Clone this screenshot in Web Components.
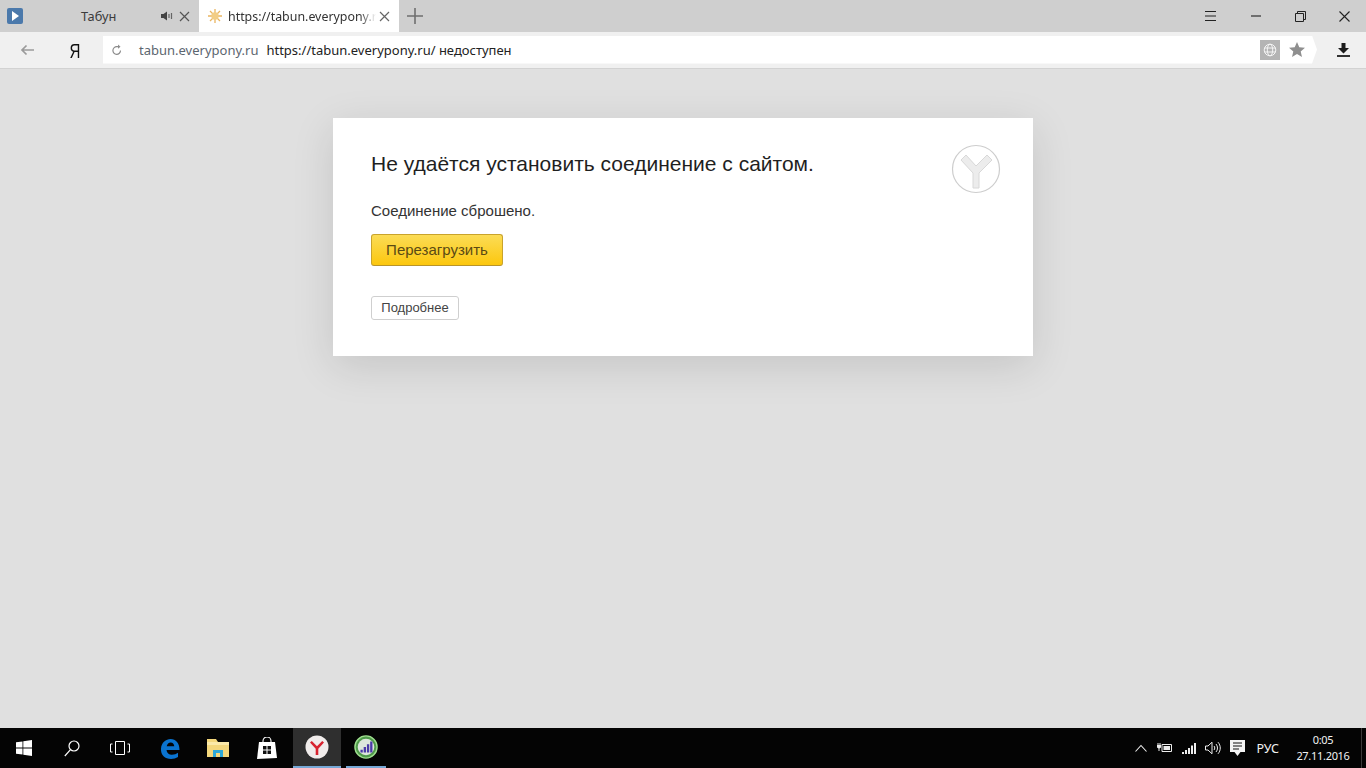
<!DOCTYPE html>
<html lang="ru">
<head>
<meta charset="utf-8">
<title>Табун</title>
<style>
    html, body { margin: 0; height: 100%; overflow: hidden; }
    body {
        display: flex;
        flex-direction: column;
        width: 1366px;
        height: 768px;
        background: #e0e0e0;
        font-family: "Noto Sans", "Liberation Sans", sans-serif;
    }
</style>
</head>
<body>
<tab-strip></tab-strip>
<nav-toolbar></nav-toolbar>
<error-page>
    <span slot="title">Не удаётся установить соединение с сайтом.</span>
    <span slot="reason">Соединение сброшено.</span>
</error-page>
<win-taskbar></win-taskbar>

<script>
class TabStrip extends HTMLElement {
    connectedCallback() {
        this.attachShadow({ mode: 'open' });
        this.shadowRoot.innerHTML = `
            <style>
                :host {
                    display: flex;
                    align-items: stretch;
                    height: 32px;
                    background: #cfcfcf;
                    color: #3c3c3c;
                    font-family: "Noto Sans", sans-serif;
                    font-size: 12.8px;
                    flex: none;
                }
                .pin { width: 7px; flex: none; }
                .fav { width: 16px; height: 16px; background: #4b79ab; border-radius: 2px; align-self: center; display: flex; align-items: center; justify-content: center; margin-top: -1px; flex: none; }
                .tab { display: flex; align-items: center; box-sizing: border-box; flex: none; }
                .first { width: 176px; }
                .first .name { width: 58px; margin-left: 58px; text-align: left; flex: none; }
                .snd { margin-left: 22px; flex: none; }
                .x { flex: none; display: block; }
                .first .x { margin-left: 6px; }
                .active { width: 200px; background: #fff; color: #333; font-size: 12.4px; }
                .sun { margin-left: 9px; flex: none; }
                .url { margin-left: 6px; width: 148px; overflow: hidden; white-space: nowrap; flex: none;
                    -webkit-mask-image: linear-gradient(90deg, #000 132px, transparent 148px);
                    mask-image: linear-gradient(90deg, #000 132px, transparent 148px); }
                .active .x { margin-left: 3px; }
                .plus { margin-left: 8px; align-self: center; display: block; }
                .spacer { flex: 1; }
                .win { width: 45px; display: flex; align-items: center; justify-content: center; flex: none; }
                .win.menu { width: 46px; }
                .win.close { width: 43px; }
                svg { display: block; }
            </style>
            <span class="pin"></span>
            <span class="fav"><svg width="8" height="10" viewBox="0 0 8 10"><path d="M1 0l7 5-7 5z" fill="#fff"/></svg></span>
            <div class="tab first">
                <span class="name">Табун</span>
                <svg class="snd" width="12" height="10" viewBox="0 0 12 10"><path d="M0 3h2.500L6 .5v9L2.500 7H0z" fill="#444"/><path d="M8 3v4M10.500 2v6" stroke="#666" stroke-width="1.200"/></svg>
                <svg class="x" width="11" height="11" viewBox="0 0 11 11"><path d="M1 1l9 9M10 1l-9 9" stroke="#555" stroke-width="1.200"/></svg>
            </div>
            <div class="tab active">
                <svg class="sun" width="14" height="14" viewBox="0 0 14 14"><g stroke="#eab560" stroke-width="1.300"><path d="M7 0v14M0 7h14M2 2l10 10M12 2L2 12"/></g><circle cx="7" cy="7" r="3.700" fill="#f2cd86"/></svg>
                <span class="url">https://tabun.everypony.ru/</span>
                <svg class="x" width="11" height="11" viewBox="0 0 11 11"><path d="M1 1l9 9M10 1l-9 9" stroke="#666" stroke-width="1.200"/></svg>
            </div>
            <svg class="plus" width="16" height="16" viewBox="0 0 16 16"><path d="M8 0v16M0 8h16" stroke="#6f6f6f" stroke-width="1.600"/></svg>
            <span class="spacer"></span>
            <div class="win menu"><svg width="11" height="10" viewBox="0 0 11 10"><path d="M0 .5h11M0 5h11M0 9.500h11" stroke="#222"/></svg></div>
            <div class="win"><svg width="10" height="2" viewBox="0 0 10 2"><path d="M0 1h10" stroke="#222" stroke-width="1.100"/></svg></div>
            <div class="win"><svg width="11" height="11" viewBox="0 0 11 11" fill="none" stroke="#222"><path d="M.5 2.500h8v8h-8z"/><path d="M2.500 2.500v-2h8v8h-2"/></svg></div>
            <div class="win close"><svg width="11" height="11" viewBox="0 0 11 11"><path d="M.5.5l10 10M10.500.5l-10 10" stroke="#222" stroke-width="1.100"/></svg></div>
        `;
    }
}

class NavToolbar extends HTMLElement {
    connectedCallback() {
        this.attachShadow({ mode: 'open' });
        this.shadowRoot.innerHTML = `
            <style>
                :host {
                    display: flex;
                    align-items: center;
                    box-sizing: border-box;
                    height: 37px;
                    background: #f0f0f0;
                    border-bottom: 1px solid #d2d2d2;
                    flex: none;
                    font-family: "Noto Sans", sans-serif;
                    font-size: 13px;
                    padding-bottom: 1px;
                }
                svg { display: block; flex: none; }
                .back { margin-left: 20px; }
                .ya { display: inline-block; width: 16px; margin-left: 33px; font: 21px "Liberation Sans", sans-serif; color: #111; text-align: center; flex: none; margin-top: 3px; transform: scaleX(.72); }
                .omni {
                    margin-left: 20px;
                    width: 1214px;
                    height: 28px;
                    background: #fff;
                    display: flex;
                    align-items: center;
                    flex: none;
                    clip-path: polygon(0 0, 1209px 0, 100% 50%, 1209px 100%, 0 100%);
                }
                .reload { margin-left: 9px; }
                .host { margin-left: 17px; color: #5c6670; white-space: nowrap; }
                .full { margin-left: 8px; color: #222; white-space: nowrap; }
                .grow { flex: 1; }
                .globe { width: 20px; height: 20px; background: #b4b4b4; display: flex; align-items: center; justify-content: center; flex: none; }
                .star { margin-left: 9px; margin-right: 12px; }
                .dl { margin-left: 20px; }
            </style>
            <svg class="back" width="14" height="12" viewBox="0 0 14 12"><path d="M14 6H2M6.500 1.500L2 6l4.500 4.500" fill="none" stroke="#9a9a9a" stroke-width="1.700"/></svg>
            <span class="ya">Я</span>
            <div class="omni">
                <svg class="reload" width="10" height="11" viewBox="0 0 10 11"><path d="M8.500 6.500A3.800 3.800 0 1 1 5 2.700H7" fill="none" stroke="#8c8c8c" stroke-width="1.200"/><path d="M6 .5l2.500 2.200L6 4.800z" fill="#8c8c8c"/></svg>
                <span class="host">tabun.everypony.ru</span>
                <span class="full">https://tabun.everypony.ru/ недоступен</span>
                <span class="grow"></span>
                <span class="globe"><svg width="14" height="14" viewBox="0 0 14 14" fill="none" stroke="#f4f4f4"><circle cx="7" cy="7" r="5.800"/><ellipse cx="7" cy="7" rx="2.700" ry="5.800"/><path d="M1.500 5h11M1.500 9h11"/></svg></span>
                <svg class="star" width="16" height="15" viewBox="0 0 16 15"><path d="M8 0l2.300 5.200 5.700.5-4.300 3.700 1.300 5.600L8 12l-5 3 1.300-5.600L0 5.700l5.700-.5z" fill="#8f8f8f"/></svg>
            </div>
            <svg class="dl" width="13" height="14" viewBox="0 0 13 14"><path d="M4.500 0h4v5H12L6.500 10.500 1 5h3.500z" fill="#1c1c1c"/><path d="M0 13h13" stroke="#1c1c1c" stroke-width="1.800"/></svg>
        `;
    }
}

class ErrorPage extends HTMLElement {
    connectedCallback() {
        this.attachShadow({ mode: 'open' });
        this.shadowRoot.innerHTML = `
            <style>
                :host {
                    display: flex;
                    flex: 1;
                    justify-content: center;
                    align-items: flex-start;
                    padding-top: 49px;
                    font-family: "Liberation Sans", Arial, sans-serif;
                    min-height: 0;
                }
                .card {
                    position: relative;
                    box-sizing: border-box;
                    width: 700px;
                    height: 238px;
                    padding: 34px 38px 0;
                    background: #fff;
                    box-shadow: 0 10px 40px rgba(0, 0, 0, .12);
                    color: #222;
                }
                h1 { margin: 0; font-size: 21px; line-height: 24px; font-weight: 400; color: #1f1f1f; }
                p { margin: 27px 0 0; font-size: 15px; line-height: 16px; color: #333; }
                .btn { display: block; box-sizing: border-box; font-family: inherit; padding: 0 0 2px; cursor: pointer; }
                .reload {
                    margin-top: 15px;
                    width: 132px;
                    height: 32px;
                    border: 1px solid #c9a32c;
                    border-bottom-color: #b8942a;
                    border-radius: 3px;
                    background: linear-gradient(#fbdc56, #fcc70e);
                    color: #5a4a14;
                    font-size: 15px;
                }
                .more {
                    margin-top: 30px;
                    width: 88px;
                    height: 24px;
                    border: 1px solid #cfcfcf;
                    border-radius: 3px;
                    background: #fff;
                    color: #444;
                    font-size: 13px;
                }
                .logo { position: absolute; left: 618px; top: 26px; display: block; }
            </style>
            <div class="card">
                <h1><slot name="title"></slot></h1>
                <p><slot name="reason"></slot></p>
                <button class="btn reload">Перезагрузить</button>
                <button class="btn more">Подробнее</button>
                <svg class="logo" width="50" height="50" viewBox="0 0 50 50">
                    <circle cx="25" cy="25" r="23.500" fill="#fff" stroke="#cdcdcd" stroke-width="1.200"/>
                    <path d="M10 16l5-5 10 11 11-11 5 5-13 13v15h-6V29z" fill="#ececec" stroke="#d8d8d8"/>
                </svg>
            </div>
        `;
    }
}

class WinTaskbar extends HTMLElement {
    connectedCallback() {
        this.attachShadow({ mode: 'open' });
        this.shadowRoot.innerHTML = `
            <style>
                :host {
                    display: flex;
                    align-items: stretch;
                    height: 40px;
                    background: #040404;
                    color: #f2f2f2;
                    font-family: "Noto Sans", sans-serif;
                    flex: none;
                }
                .slot { box-sizing: border-box; display: flex; align-items: center; justify-content: center; flex: none; }
                .btn { width: 48px; }
                .run { width: 48px; }
                .yandex { background: #2f2f2f; border-bottom: 2px solid #76a8d6; width: 48px; margin-left: 2px; }
                .graph { border-bottom: 2px solid #76a8d6; width: 40px; margin-left: 5px; }
                .grow { flex: 1; }
                .tray { display: flex; align-items: center; flex: none; }
                .tray svg { display: block; flex: none; }
                .lang { font-size: 12.5px; margin-left: 11px; }
                .clock { width: 70px; margin-left: 9px; text-align: center; font-size: 11px; letter-spacing: -.3px; line-height: 16px; margin-top: -1px; }
                .edge { width: 4px; height: 100%; flex: none; border-left: 1px solid #3a3a3a; margin-left: 3px; }
                svg { display: block; }
            </style>
            <div class="slot btn"><svg width="16" height="16" viewBox="0 0 16 16" fill="#fff"><path d="M0 2.300l6.500-.9v6.200H0zM7.300 1.300L16 0v7.600H7.300zM0 8.400h6.500v6.200L0 13.700zM7.300 8.400H16V16l-8.700-1.300z"/></svg></div>
            <div class="slot btn"><svg width="16" height="17" viewBox="0 0 16 17" fill="none" stroke="#fff" stroke-width="1.200"><circle cx="10" cy="6" r="5"/><path d="M6.500 9.700L.8 16"/></svg></div>
            <div class="slot btn"><svg width="20" height="14" viewBox="0 0 20 14" fill="none" stroke="#fff"><path d="M5.500.5h9v13h-9z"/><path d="M2.500 3H.5v8h2M17.500 3h2v8h-2"/></svg></div>
            <div class="slot run" style="margin-left:2px"><svg width="20" height="21" viewBox="0 0 20 21"><path d="M1 10.500C1.500 4.500 6 1 10.500 1 16 1 19.500 5 19.500 12H6.500c.3 3 2.500 4.700 5.300 4.700 2.500 0 4.600-.8 6.200-2v4.300c-2 1.300-4.300 2-6.900 2C5 21 .5 17 1 10.500zM6.700 8.300h7.600C14 6 12.700 4.500 10.700 4.500 8.700 4.500 7.200 6 6.700 8.300z" fill="#0a73cf"/></svg></div>
            <div class="slot run"><svg width="22" height="18" viewBox="0 0 22 18"><path d="M0 0h9l2 3h11v15H0z" fill="#f4d77c"/><path d="M0 3h22v3H0z" fill="#fbe9a9"/><path d="M6 18v-7h10v7h-3v-4H9v4z" fill="#2da8d8"/></svg></div>
            <div class="slot run" style="margin-left:1px"><svg width="20" height="23" viewBox="0 0 20 23"><path d="M6 6V4a4 4 0 0 1 8 0v2" fill="none" stroke="#fff" stroke-width="1.100"/><path d="M2 6h16l2 16-20 1z" fill="#fff" transform="translate(0 -1)"/><path d="M6 9h3.500v3.500H6zM10.500 9H14v3.500h-3.500zM6 13.500h3.500V17H6zM10.500 13.500H14V17h-3.500z" fill="#111"/></svg></div>
            <div class="slot yandex"><svg width="24" height="24" viewBox="0 0 24 24"><circle cx="12" cy="12" r="11.500" fill="#f0eceb"/><path d="M5 7.500L6.800 6 12 11.300 17.200 6 19 7.500l-5.700 6.300V20h-2.600v-6.200z" fill="#d8232f"/></svg></div>
            <div class="slot graph"><svg width="24" height="24" viewBox="0 0 26 26"><circle cx="13" cy="13" r="12" fill="#4f9a4a"/><circle cx="13" cy="13" r="12" fill="none" stroke="#9fe08f" stroke-width="1.500"/><circle cx="13" cy="13" r="9" fill="#dde6dd"/><path d="M7 16h2.500v3H7zM10.500 13H13v6h-2.500zM14 10h2.500v9H14zM17.500 7H20v12h-2.500z" fill="#4a3aa8"/></svg></div>
            <span class="grow"></span>
            <div class="tray">
                <svg width="12" height="8" viewBox="0 0 12 8" fill="none" stroke="#eee" stroke-width="1.100"><path d="M.5 7.500L6 1.500l5.500 6"/></svg>
                <svg style="margin-left:10px" width="15" height="10" viewBox="0 0 15 10"><path d="M5 1.500h9.500v7H5z" fill="none" stroke="#eee"/><path d="M6.500 3h6.500v4H6.500zM.5 0h1v2h-1zM2.500 0h1v2h-1zM0 2h4v2.500L2.500 5.500V8H1.500V5.500L0 4.500z" fill="#eee"/></svg>
                <svg style="margin-left:10px" width="14" height="11" viewBox="0 0 14 11" fill="#eee"><path d="M0 9h2v2H0zM3 7h2v4H3zM6 5h2v6H6zM9 2.500h2V11H9zM12 0h2v11h-2z"/></svg>
                <svg style="margin-left:9px" width="16" height="14" viewBox="0 0 16 14" fill="none" stroke="#eee"><path d="M.5 5H3L7 1.200v11.600L3 9H.5zM9 5c1 1.200 1 2.800 0 4M11 3c2 2.300 2 5.700 0 8M13 1.200c3 3.300 3 8.300 0 11.600"/></svg>
                <svg style="margin-left:9px" width="15" height="16" viewBox="0 0 15 16"><path d="M0 0h15v12h-4.500l-3 4-3-4H0z" fill="#f4f4f4"/><path d="M3 3h9M3 6h9M3 9h6" stroke="#111"/></svg>
                <span class="lang">РУС</span>
                <div class="clock">0:05<br>27.11.2016</div>
                <span class="edge"></span>
            </div>
        `;
    }
}

customElements.define('tab-strip', TabStrip);
customElements.define('nav-toolbar', NavToolbar);
customElements.define('error-page', ErrorPage);
customElements.define('win-taskbar', WinTaskbar);
</script>
</body>
</html>
